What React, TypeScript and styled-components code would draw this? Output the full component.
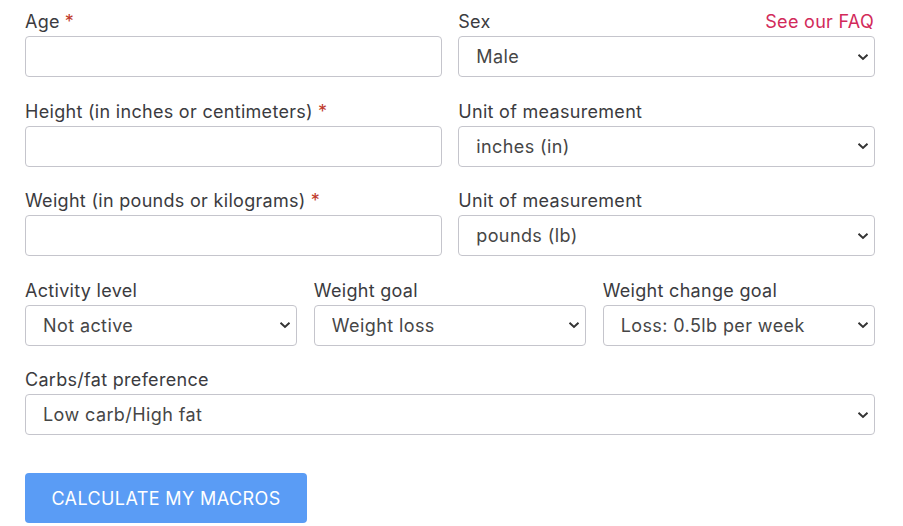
import React from "react";
import styled, { createGlobalStyle } from "styled-components";

const Global = createGlobalStyle`
  html, body { margin: 0; padding: 0; background: #ffffff; }
  body { font-family: Inter, "Noto Sans", "Liberation Sans", sans-serif; letter-spacing: 0.3px; }
  * { box-sizing: border-box; }
`;

const Form = styled.form`
  width: 850px;
  margin: 0 0 0 25px;
  padding-top: 9px;
  display: flex;
  flex-direction: column;
  gap: 21.5px;
`;

const Row = styled.div<{ $cols: number }>`
  display: grid;
  grid-template-columns: repeat(${(p) => p.$cols}, 1fr);
  column-gap: 16.5px;
`;

const Field = styled.div`
  display: flex;
  flex-direction: column;
  min-width: 0;
`;

const LabelRow = styled.div`
  display: flex;
  justify-content: space-between;
  align-items: baseline;
  margin-bottom: 2px;
`;

const Label = styled.label`
  font-size: 18px;
  line-height: 25px;
  color: #3b3b40;
`;

const Req = styled.span`
  color: #c0392b;
  margin-left: 5px;
`;

const FaqLink = styled.a`
  font-size: 18px;
  line-height: 25px;
  color: #d22a5a;
  text-decoration: none;
  margin-right: 1px;
`;

const TextInput = styled.input`
  height: 41px;
  width: 100%;
  border: 1px solid #c5c5cc;
  border-radius: 4px;
  padding: 0 17px;
  font: inherit;
  font-size: 18px;
  letter-spacing: 0.4px;
  color: #444;
  background: #fff;
  outline: none;
`;

const chevron =
  "url(\"data:image/svg+xml;utf8,<svg xmlns='http://www.w3.org/2000/svg' width='12' height='8' viewBox='0 0 12 8'><path d='M1.5 1.8 L6 6 L10.5 1.8' fill='none' stroke='%23333' stroke-width='2'/></svg>\")";

const Select = styled.select`
  height: 41px;
  width: 100%;
  border: 1px solid #c5c5cc;
  border-radius: 4px;
  padding: 0 30px 0 17px;
  font: inherit;
  font-size: 18px;
  letter-spacing: 0.4px;
  color: #464646;
  background-color: #fff;
  background-image: ${chevron};
  background-repeat: no-repeat;
  background-position: right 5px center;
  background-size: 12px 8px;
  appearance: none;
  -webkit-appearance: none;
  outline: none;
`;

const ButtonRow = styled.div`
  padding-top: 16.5px;
`;

const Button = styled.button`
  width: 282px;
  height: 50px;
  border: none;
  border-radius: 4px;
  background: #5a9cf5;
  color: #ffffff;
  font: inherit;
  font-size: 18px;
  letter-spacing: 0.4px;
  text-transform: uppercase;
  cursor: pointer;
`;

type Opt = string[];

const SelectField = ({ label, options, extra }: { label: string; options: Opt; extra?: React.ReactNode }) => (
  <Field>
    <LabelRow>
      <Label>{label}</Label>
      {extra}
    </LabelRow>
    <Select defaultValue={options[0]}>
      {options.map((o) => (
        <option key={o}>{o}</option>
      ))}
    </Select>
  </Field>
);

const InputField = ({ label }: { label: string }) => (
  <Field>
    <LabelRow>
      <Label>
        {label}
        <Req>*</Req>
      </Label>
    </LabelRow>
    <TextInput type="text" />
  </Field>
);

export default function App() {
  return (
    <>
      <Global />
      <Form onSubmit={(e) => e.preventDefault()}>
        <Row $cols={2}>
          <InputField label="Age" />
          <SelectField label="Sex" options={["Male", "Female"]} extra={<FaqLink href="#">See our FAQ</FaqLink>} />
        </Row>
        <Row $cols={2}>
          <InputField label="Height (in inches or centimeters)" />
          <SelectField label="Unit of measurement" options={["inches (in)", "centimeters (cm)"]} />
        </Row>
        <Row $cols={2}>
          <InputField label="Weight (in pounds or kilograms)" />
          <SelectField label="Unit of measurement" options={["pounds (lb)", "kilograms (kg)"]} />
        </Row>
        <Row $cols={3}>
          <SelectField label="Activity level" options={["Not active", "Lightly active", "Active", "Very active"]} />
          <SelectField label="Weight goal" options={["Weight loss", "Maintenance", "Weight gain"]} />
          <SelectField label="Weight change goal" options={["Loss: 0.5lb per week", "Loss: 1lb per week"]} />
        </Row>
        <Row $cols={1}>
          <SelectField label="Carbs/fat preference" options={["Low carb/High fat", "Balanced", "High carb/Low fat"]} />
        </Row>
        <ButtonRow>
          <Button type="submit">Calculate my macros</Button>
        </ButtonRow>
      </Form>
    </>
  );
}
